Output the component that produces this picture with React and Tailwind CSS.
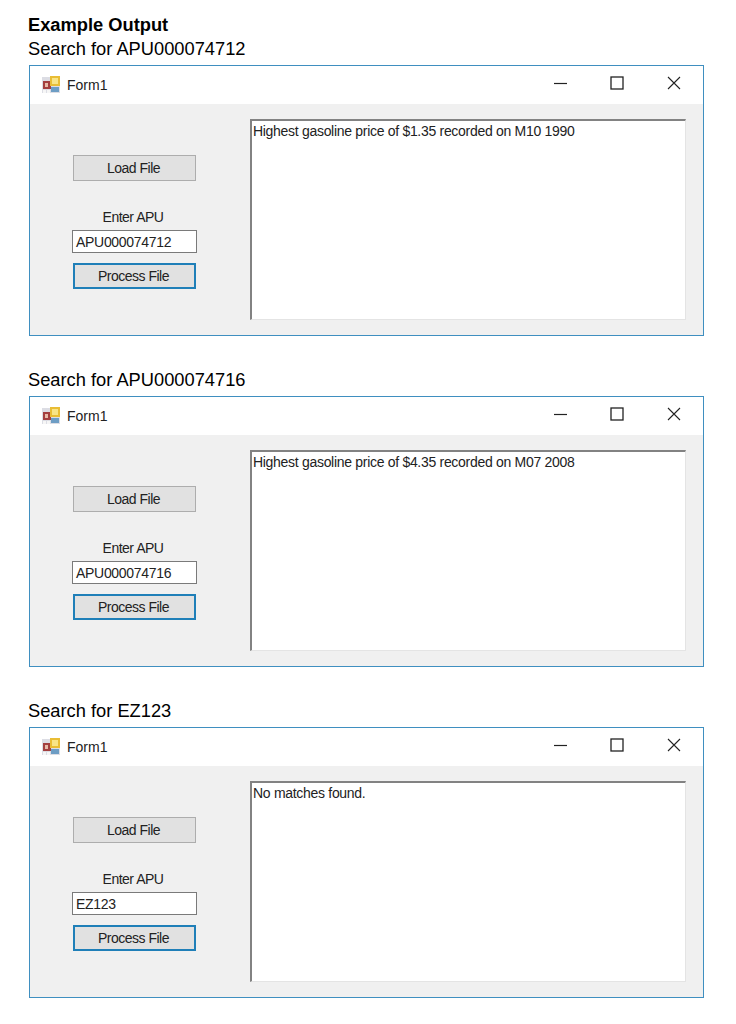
const FormIcon = () => (
  <svg width="18" height="18" viewBox="0 0 18 18" className="shrink-0">
    <rect x="0" y="1" width="18" height="16" fill="#dcdde4" />
    <rect x="1" y="5" width="8" height="8" fill="#a33f3f" />
    <rect x="3" y="7" width="3" height="4" fill="#e6b9a8" />
    <rect x="8" y="0" width="10" height="10" fill="#e9bd35" />
    <rect x="10" y="2" width="6" height="6" fill="#f8e487" />
    <rect x="9" y="11" width="8" height="5" fill="#6d9dc4" />
    <rect x="1" y="14" width="3" height="3" fill="#f6f6f6" />
    <rect x="5" y="14" width="3" height="3" fill="#f6f6f6" />
  </svg>
);

const WindowControls = () => (
  <div className="mb-[3px] flex items-center text-[#222]">
    <svg width="14" height="14" viewBox="0 0 14 14" className="mr-[42px]">
      <path d="M0 7.5h13" stroke="currentColor" strokeWidth="1.2" />
    </svg>
    <svg width="14" height="14" viewBox="0 0 14 14" className="mr-[43px]">
      <rect x="1" y="1" width="12" height="12" fill="none" stroke="currentColor" strokeWidth="1.3" />
    </svg>
    <svg width="14" height="14" viewBox="0 0 14 14">
      <path d="M1 1l12 12M13 1L1 13" stroke="currentColor" strokeWidth="1.1" />
    </svg>
  </div>
);

const FormWindow = ({ apu, output }) => (
  <div className="ml-px flex h-[271px] w-[675px] flex-col border border-[#3f8fc0] bg-[#f0f0f0] font-['Liberation_Sans',sans-serif] text-[14px] tracking-[-0.3px] text-[#222]">
    <div className="flex h-[38px] items-center justify-between bg-white pr-[22px] pb-px pl-[12px]">
      <div className="flex items-center gap-[7px]">
        <FormIcon />
        <span className="tracking-normal">Form1</span>
      </div>
      <WindowControls />
    </div>
    <div className="flex flex-1 pt-[15px] pl-[42px]">
      <div className="flex w-[125px] flex-col items-center pt-[36px] tracking-[-0.5px]">
        <div className="flex h-[26px] w-[123px] items-center justify-center border border-[#adadad] bg-[#e1e1e1] pr-[2px]">
          Load File
        </div>
        <div className="mt-[26px] h-[20px] pr-[3px] leading-[20px]">Enter APU</div>
        <div className="mt-[3px] flex h-[23px] w-[125px] items-center border border-[#7a7a7a] bg-white pl-[3px] tracking-[-0.3px]">
          {apu}
        </div>
        <div className="mt-[10px] flex h-[26px] w-[123px] items-center justify-center border-2 border-[#1f7fb8] bg-[#e1e1e1] pr-[2px]">
          Process File
        </div>
      </div>
      <div className="ml-[53px] h-[201px] w-[436px] border-t-2 border-r border-b border-l-2 border-t-[#828282] border-r-[#e4e4e4] border-b-[#e4e4e4] border-l-[#828282] bg-white pt-px pl-px leading-[18px]">
        {output}
      </div>
    </div>
  </div>
);

const searches = [
  { apu: "APU000074712", output: "Highest gasoline price of $1.35 recorded on M10 1990" },
  { apu: "APU000074716", output: "Highest gasoline price of $4.35 recorded on M07 2008" },
  { apu: "EZ123", output: "No matches found." },
];

export default function App() {
  return (
    <div className="h-[1024px] bg-white pt-[14px] pl-[28px] font-['Liberation_Sans',sans-serif] text-[18.3px] leading-[22px] text-black">
      <div className="font-bold">Example Output</div>
      <div className="mt-[2px] flex flex-col gap-[33px]">
        {searches.map((s) => (
          <div key={s.apu}>
            <div className="mb-[5px]">Search for {s.apu}</div>
            <FormWindow apu={s.apu} output={s.output} />
          </div>
        ))}
      </div>
    </div>
  );
}
